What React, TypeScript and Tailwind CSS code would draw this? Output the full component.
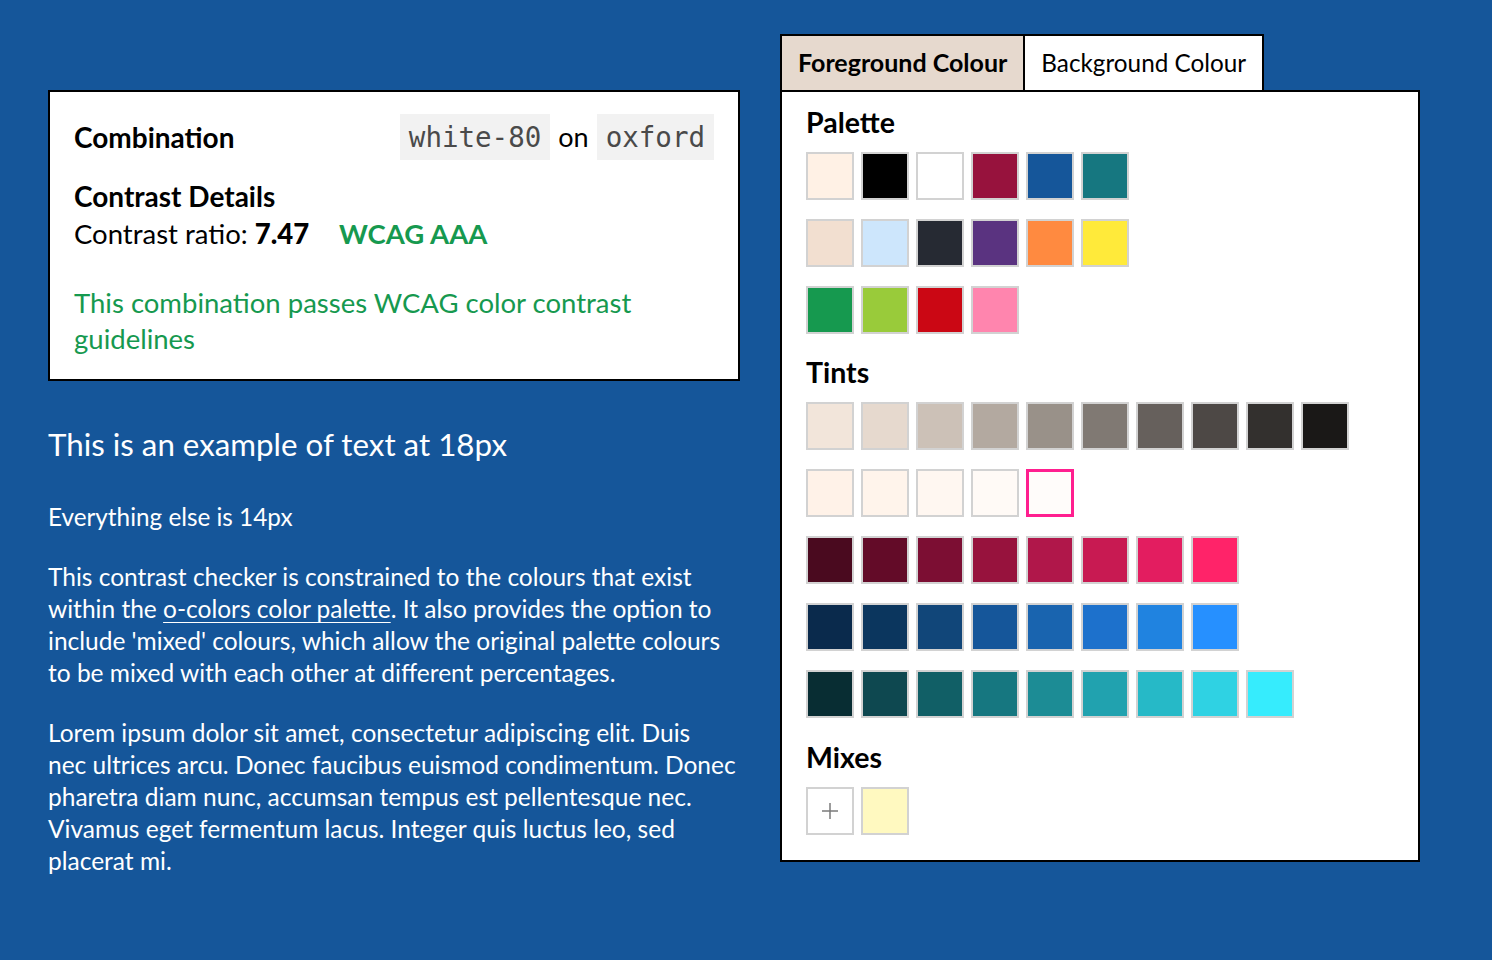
import React from "react";

const palette: string[][] = [
  ["#fff1e5", "#000000", "#ffffff", "#97123d", "#15569a", "#167780"],
  ["#f2dfd0", "#cde6fc", "#262a33", "#5a3380", "#ff8a40", "#ffea3a"],
  ["#16994f", "#99cb3a", "#cb0714", "#ff85ae"],
];

const tints: string[][] = [
  ["#f2e5da", "#e6d9ce", "#ccc1b7", "#b3a9a0", "#999189", "#807973", "#66605c", "#4d4845", "#33302e", "#1a1817"],
  ["#fff2e8", "#fff4eb", "#fff7f1", "#fffaf6", "#fffcfa"],
  ["#4a0a1f", "#630b28", "#7c0e33", "#97123d", "#b0174a", "#c81a52", "#e31d60", "#ff2369"],
  ["#0a2a4c", "#0b365e", "#114679", "#15569a", "#1964af", "#1d71cc", "#2083e0", "#2690ff"],
  ["#082d33", "#0e4850", "#115f66", "#167780", "#1c8c95", "#21a2af", "#26b9c7", "#2fd2e3", "#36ecfd"],
];

const font = { fontFamily: "Lato, 'Noto Sans', sans-serif" };

function Swatch({ color, selected }: { color: string; selected?: boolean }) {
  return (
    <button
      className={
        selected
          ? "w-12 h-12 border-[3px] border-[#ff1f8f]"
          : "w-12 h-12 border-2 border-[#d2d2d2]"
      }
      style={{ backgroundColor: color }}
      aria-label={color}
    />
  );
}

function SwatchRows({ rows, selected }: { rows: string[][]; selected?: string }) {
  return (
    <div className="flex flex-col gap-[19px]">
      {rows.map((row, i) => (
        <div key={i} className="flex gap-[7px]">
          {row.map((c, j) => (
            <Swatch key={j} color={c} selected={selected === `${i}-${j}`} />
          ))}
        </div>
      ))}
    </div>
  );
}

export default function App() {
  return (
    <div
      className="min-h-screen bg-[#15569a] flex gap-10 pl-12 pt-[34px]"
      style={font}
    >
      {/* Left column */}
      <div className="w-[692px] mt-[56px] flex flex-col">
        <div className="border-2 border-black bg-white px-6 pt-[22px] pb-[22px] text-black">
          <div className="flex items-center justify-between">
            <h2 className="text-[28px] font-bold leading-[36px]">Combination</h2>
            <div className="text-[27px] leading-[46px] flex items-center gap-[8px]">
              <code className="bg-[#f2f2f2] text-[#4a4a4a] text-[27.5px] px-[9px] leading-[46px] font-['DejaVu_Sans_Mono',monospace]">
                white-80
              </code>
              <span>on</span>
              <code className="bg-[#f2f2f2] text-[#4a4a4a] text-[27.5px] px-[9px] leading-[46px] font-['DejaVu_Sans_Mono',monospace]">
                oxford
              </code>
            </div>
          </div>
          <h3 className="mt-[18px] text-[28px] font-bold leading-[36px]">Contrast Details</h3>
          <p className="mt-[2px] text-[27.5px] leading-[36px]">
            Contrast ratio: <strong className="font-black">7.47</strong>
            <span className="ml-[30px] font-bold text-[#16994f]">WCAG AAA</span>
          </p>
          <p className="mt-[33px] text-[27.5px] leading-[36px] text-[#16994f] pr-[60px]">
            This combination passes WCAG color contrast guidelines
          </p>
        </div>

        <div className="text-white">
          <p className="mt-[43px] text-[31.3px] leading-[40px]">This is an example of text at 18px</p>
          <p className="mt-[37px] text-[24.3px] leading-[32px]">Everything else is 14px</p>
          <p className="mt-[28px] text-[24.5px] leading-[32px]">
            This contrast checker is constrained to the colours that exist within the{" "}
            <a href="#" className="underline underline-offset-4 decoration-1">
              o-colors color palette
            </a>
            . It also provides the option to include 'mixed' colours, which allow the original palette
            colours to be mixed with each other at different percentages.
          </p>
          <p className="mt-[28px] text-[24.5px] leading-[32px]">
            Lorem ipsum dolor sit amet, consectetur adipiscing elit. Duis
            <br />
            nec ultrices arcu. Donec faucibus euismod condimentum. Donec pharetra diam nunc,
            accumsan tempus est pellentesque nec. Vivamus eget fermentum lacus. Integer quis luctus
            leo, sed placerat mi.
          </p>
        </div>
      </div>

      {/* Right column */}
      <div className="w-[640px] flex flex-col">
        <div className="flex">
          <button className="border-2 border-b-0 border-black bg-[#e6d9ce] px-4 h-[56px] text-[25px] font-bold text-black">
            Foreground Colour
          </button>
          <button className="border-2 border-l-0 border-b-0 border-black bg-white px-4 h-[56px] text-[24.3px] text-black">
            Background Colour
          </button>
        </div>
        <div className="border-2 border-black bg-white px-6 pt-[14px] pb-[25px] text-black">
          <h3 className="text-[28.5px] font-bold leading-[32px] mb-[14px]">Palette</h3>
          <SwatchRows rows={palette} />
          <h3 className="mt-[22px] text-[28.5px] font-bold leading-[32px] mb-[14px]">Tints</h3>
          <SwatchRows rows={tints} selected="1-4" />
          <h3 className="mt-[23px] text-[28.5px] font-bold leading-[32px] mb-[14px]">Mixes</h3>
          <div className="flex gap-[7px]">
            <button className="w-12 h-12 border-2 border-[#d2d2d2] bg-white flex items-center justify-center" aria-label="Add mix">
              <svg width="18" height="18" viewBox="0 0 18 18">
                <line x1="9" y1="1" x2="9" y2="17" stroke="#7a7a7a" strokeWidth="1.5" />
                <line x1="1" y1="9" x2="17" y2="9" stroke="#7a7a7a" strokeWidth="1.5" />
              </svg>
            </button>
            <Swatch color="#fff9c0" />
          </div>
        </div>
      </div>
    </div>
  );
}
